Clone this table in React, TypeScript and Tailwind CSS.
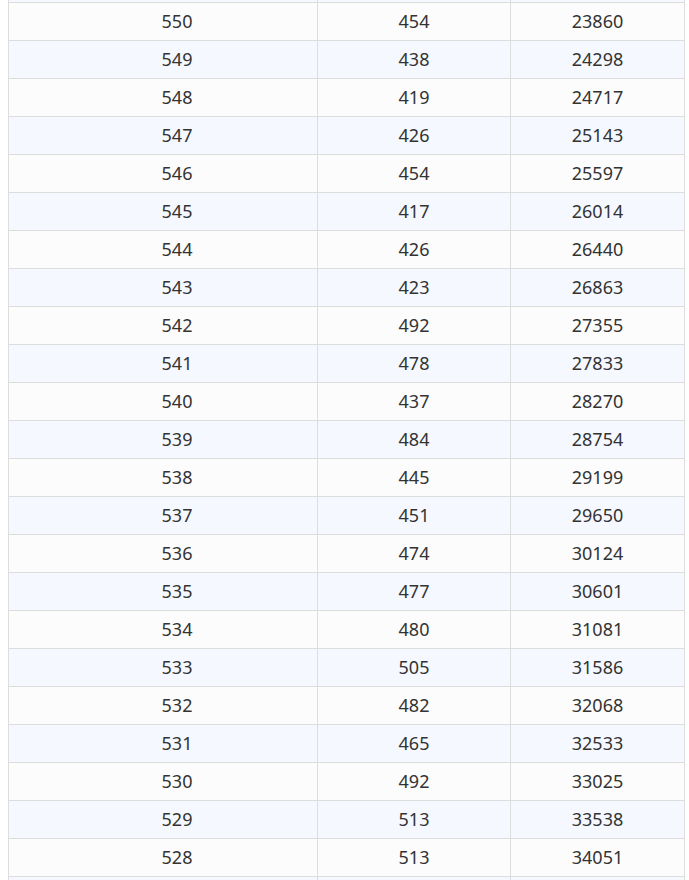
const rows: [number, string, string, string][] = [
  [551, "", "", ""],
  [550, "550", "454", "23860"],
  [549, "549", "438", "24298"],
  [548, "548", "419", "24717"],
  [547, "547", "426", "25143"],
  [546, "546", "454", "25597"],
  [545, "545", "417", "26014"],
  [544, "544", "426", "26440"],
  [543, "543", "423", "26863"],
  [542, "542", "492", "27355"],
  [541, "541", "478", "27833"],
  [540, "540", "437", "28270"],
  [539, "539", "484", "28754"],
  [538, "538", "445", "29199"],
  [537, "537", "451", "29650"],
  [536, "536", "474", "30124"],
  [535, "535", "477", "30601"],
  [534, "534", "480", "31081"],
  [533, "533", "505", "31586"],
  [532, "532", "482", "32068"],
  [531, "531", "465", "32533"],
  [530, "530", "492", "33025"],
  [529, "529", "513", "33538"],
  [528, "528", "513", "34051"],
  [527, "", "", ""],
];

export default function App() {
  return (
    <div
      className="h-[880px] w-[689px] overflow-hidden bg-white text-[#333333]"
      style={{ fontFamily: '"Noto Sans", "Open Sans", sans-serif' }}
    >
      <div className="ml-[8px] mt-[-35px] w-[677px] border-l border-r border-[#dddddd]">
        {rows.map(([key, score, count, total], i) => (
          <div
            key={key}
            className={`flex h-[38px] border-b border-[#dddddd] text-[18px] ${
              i % 2 === 0 ? "bg-[#f5f9ff]" : "bg-[#fcfcfc]"
            }`}
          >
            <div className="flex w-[309px] items-center justify-center border-r border-[#dddddd] pl-[28px]">
              {score}
            </div>
            <div className="flex w-[193px] items-center justify-center border-r border-[#dddddd]">
              {count}
            </div>
            <div className="flex w-[173px] items-center justify-center">
              {total}
            </div>
          </div>
        ))}
      </div>
    </div>
  );
}
